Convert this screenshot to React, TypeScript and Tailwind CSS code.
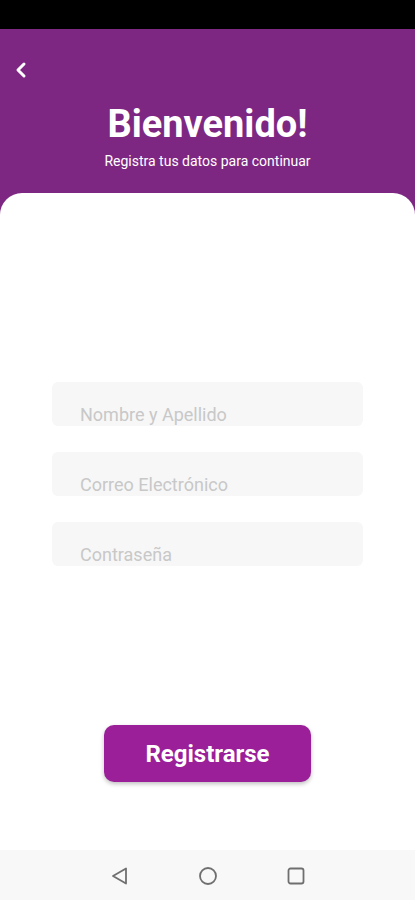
import React from "react";

const fields = ["Nombre y Apellido", "Correo Electrónico", "Contraseña"];

const BackIcon = () => (
  <svg width="14" height="18" viewBox="0 0 14 18" fill="none">
    <path d="M10 3 L4 9 L10 15" stroke="white" strokeWidth="3" strokeLinecap="round" strokeLinejoin="round" />
  </svg>
);

const NavBar = () => (
  <div className="h-[50px] bg-[#f8f8f8] flex items-center justify-center gap-[66px] pt-[2px]">
    <svg width="22" height="22" viewBox="0 0 22 22" fill="none">
      <path d="M17 3.5 L17 18.5 L4 11 Z" stroke="#6f6f6f" strokeWidth="1.8" strokeLinejoin="round" />
    </svg>
    <svg width="22" height="22" viewBox="0 0 22 22" fill="none">
      <circle cx="11" cy="11" r="8" stroke="#6f6f6f" strokeWidth="1.8" />
    </svg>
    <svg width="22" height="22" viewBox="0 0 22 22" fill="none">
      <rect x="3.5" y="3.5" width="15" height="15" rx="2" stroke="#6f6f6f" strokeWidth="1.8" />
    </svg>
  </div>
);

export default function App() {
  return (
    <div className="w-[415px] h-[900px] flex flex-col bg-[#7d2783] font-['Roboto',sans-serif]">
      <div className="h-[29px] bg-black" />
      <div className="h-[164px] flex flex-col">
        <div className="pl-[14px] pt-[32px] h-[57px]">
          <BackIcon />
        </div>
        <h1 className="text-center text-white font-bold text-[38px] leading-[44px] mt-[16px]">
          Bienvenido!
        </h1>
        <p className="text-center text-white text-[14px] leading-[18px] mt-[6px]">
          Registra tus datos para continuar
        </p>
      </div>
      <div className="flex-1 bg-white rounded-t-[22px] flex flex-col">
        <div className="flex flex-col gap-[26px] px-[52px] pt-[189px]">
          {fields.map((f) => (
            <div
              key={f}
              className="h-[44px] rounded-[6px] bg-[#f7f7f7] pl-[28px] flex items-end pb-0 text-[18px] leading-[22px] text-[#c8c8c8]"
            >
              {f}
            </div>
          ))}
        </div>
        <div className="flex justify-center mt-[159px]">
          <button className="w-[207px] h-[57px] rounded-[10px] bg-[#9a1f98] text-white font-bold text-[24px] shadow-[0_2px_4px_rgba(0,0,0,0.25)]">
            Registrarse
          </button>
        </div>
        <div className="flex-1" />
        <NavBar />
      </div>
    </div>
  );
}
